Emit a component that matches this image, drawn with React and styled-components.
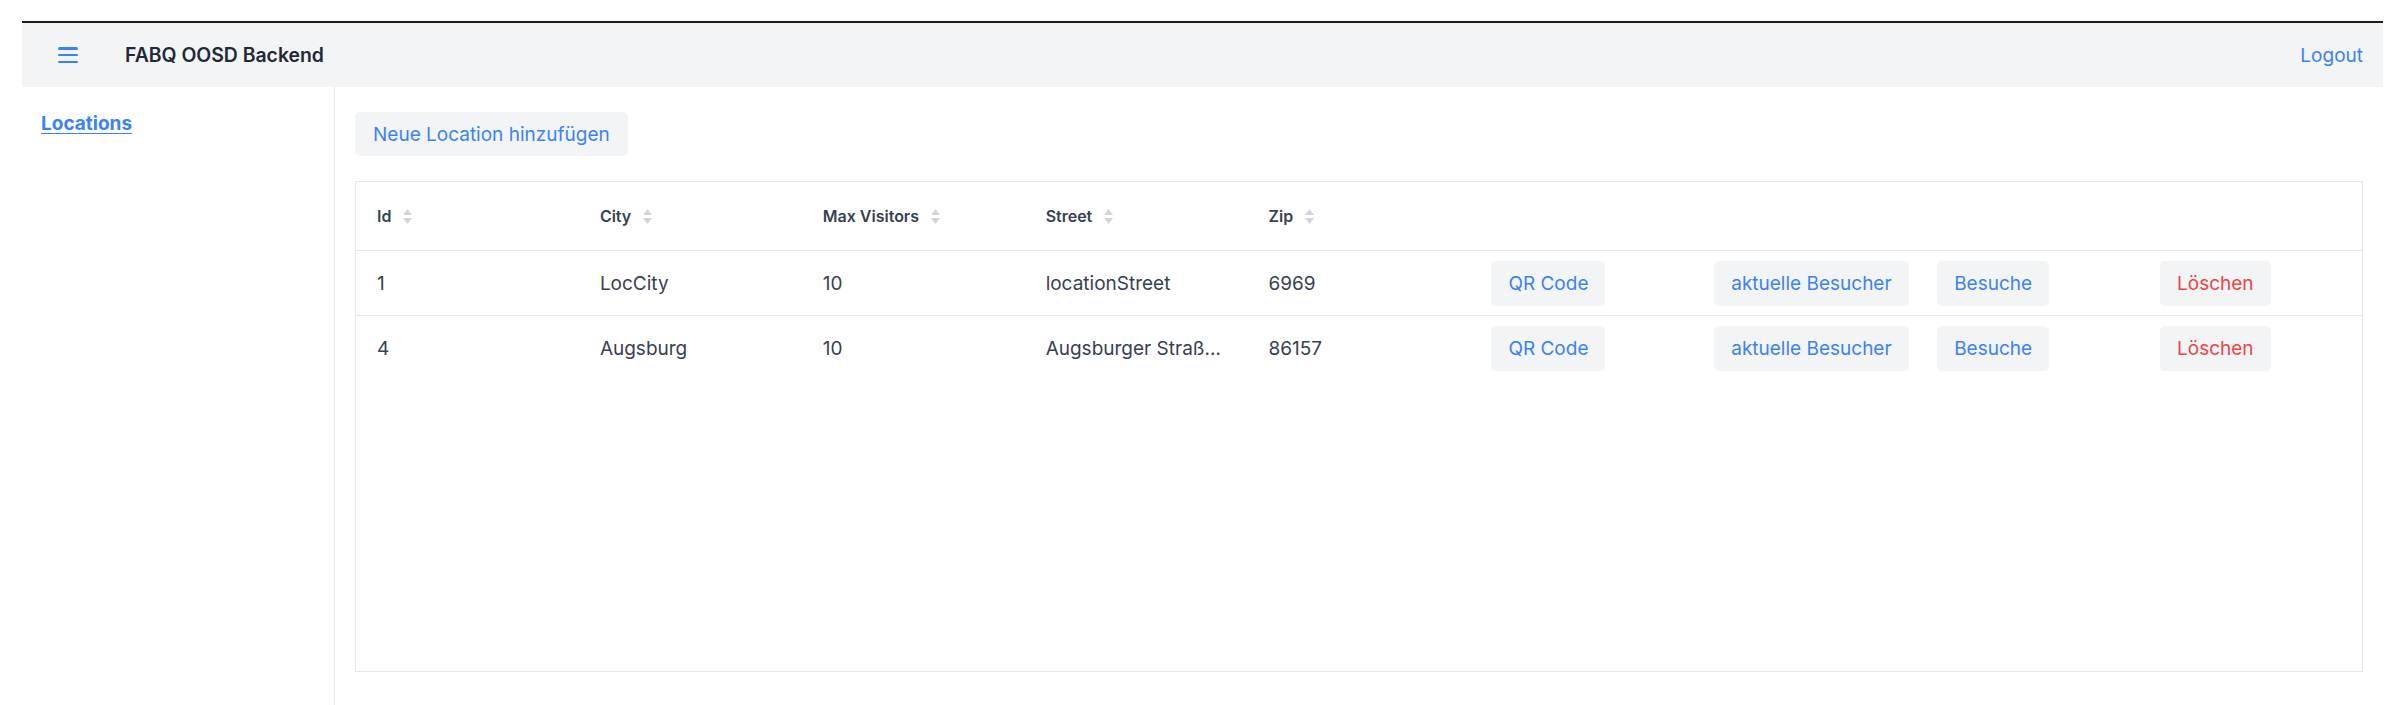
import React from 'react'
import styled, { createGlobalStyle } from 'styled-components'

const GlobalStyle = createGlobalStyle`
    html, body {
        margin: 0;
        padding: 0;
        background: #ffffff;
        font-family: Inter, "Liberation Sans", sans-serif;
        color: #374151;
    }
`

const Frame = styled.div`
    padding: 21px 3px 0 22px;
    height: 705px;
    box-sizing: border-box;
    display: flex;
    flex-direction: column;
`

const Shell = styled.div`
    border-top: 2px solid #1c1c1c;
    flex: 1;
    display: flex;
    flex-direction: column;
    min-height: 0;
`

const TopBar = styled.header`
    height: 64px;
    background: #f3f4f6;
    display: flex;
    align-items: center;
    padding: 0 20px 0 36px;
`

const MenuButton = styled.button`
    border: 0;
    background: none;
    padding: 0;
    width: 20px;
    height: 16px;
    display: flex;
    flex-direction: column;
    justify-content: space-between;
    cursor: pointer;

    span {
        display: block;
        height: 2.5px;
        border-radius: 2px;
        background: #3b82f6;
    }
`

const Title = styled.h1`
    margin: 0 0 0 47px;
    font-size: 19.4px;
    font-weight: 600;
    color: #1f2937;
`

const Logout = styled.a`
    margin-left: auto;
    font-size: 19px;
    color: #3b82f6;
    text-decoration: none;
`

const Body = styled.div`
    flex: 1;
    display: flex;
    min-height: 0;
`

const Sidebar = styled.nav`
    width: 313px;
    border-right: 1px solid #e5e7eb;
    padding: 25px 0 0 19px;
    box-sizing: border-box;
`

const NavLink = styled.a`
    font-size: 19px;
    font-weight: 700;
    color: #3b82f6;
    text-decoration: underline;
    text-underline-offset: 3px;
`

const Main = styled.main`
    flex: 1;
    padding: 25px 20px 0 20px;
    min-width: 0;
`

const ActionButton = styled.button`
    border: 0;
    border-radius: 5px;
    background: #f3f4f6;
    font-family: inherit;
    font-size: 19px;
    color: ${p => (p.$danger ? '#ef4444' : '#3b82f6')};
    height: ${p => p.$height || 45}px;
    padding: 0 ${p => p.$pad || 17}px;
    cursor: pointer;
    white-space: nowrap;
`

const TableBox = styled.div`
    margin-top: 25px;
    height: 491px;
    border: 1px solid #e5e7eb;
    box-sizing: border-box;
`

const Table = styled.table`
    width: 100%;
    table-layout: fixed;
    border-collapse: collapse;
`

const HeadCell = styled.th`
    height: 68px;
    padding: 0 21px;
    text-align: left;
    font-size: 16px;
    font-weight: 600;
    color: #374151;
    border-bottom: 1px solid #e5e7eb;
`

const HeadInner = styled.span`
    display: inline-flex;
    align-items: center;
    gap: 12px;
`

const Row = styled.tr`
    & + & td {
        border-top: 1px solid #e5e7eb;
    }
`

const Cell = styled.td`
    height: 65px;
    padding: 0 21px;
    font-size: 19px;
    color: #374151;
    white-space: nowrap;
    overflow: ${p => (p.$action ? 'visible' : 'hidden')};
    text-overflow: ellipsis;
    box-sizing: border-box;
`

const SortIcon = () => (
    <svg width="9" height="15" viewBox="0 0 9 15">
        <path d="M4.5 0 L9 6 L0 6 Z" fill="#d1d5db" />
        <path d="M0 9 L9 9 L4.5 15 Z" fill="#d1d5db" />
    </svg>
)

const columns = ['Id', 'City', 'Max Visitors', 'Street', 'Zip']

const locations = [
    { id: 1, city: 'LocCity', maxVisitors: 10, street: 'locationStreet', zip: '6969' },
    { id: 4, city: 'Augsburg', maxVisitors: 10, street: 'Augsburger Straße 12', zip: '86157' },
]

const App = () => (
    <>
        <GlobalStyle />
        <Frame>
            <Shell>
                <TopBar>
                    <MenuButton aria-label="Menu">
                        <span />
                        <span />
                        <span />
                    </MenuButton>
                    <Title>FABQ OOSD Backend</Title>
                    <Logout href="#">Logout</Logout>
                </TopBar>
                <Body>
                    <Sidebar>
                        <NavLink href="#">Locations</NavLink>
                    </Sidebar>
                    <Main>
                        <ActionButton $height={44} $pad={18}>Neue Location hinzufügen</ActionButton>
                        <TableBox>
                            <Table>
                                <thead>
                                    <tr>
                                        {columns.map(c => (
                                            <HeadCell key={c}>
                                                <HeadInner>
                                                    {c}
                                                    <SortIcon />
                                                </HeadInner>
                                            </HeadCell>
                                        ))}
                                        <HeadCell />
                                        <HeadCell />
                                        <HeadCell />
                                        <HeadCell />
                                    </tr>
                                </thead>
                                <tbody>
                                    {locations.map(l => (
                                        <Row key={l.id}>
                                            <Cell>{l.id}</Cell>
                                            <Cell>{l.city}</Cell>
                                            <Cell>{l.maxVisitors}</Cell>
                                            <Cell>{l.street}</Cell>
                                            <Cell>{l.zip}</Cell>
                                            <Cell $action><ActionButton>QR Code</ActionButton></Cell>
                                            <Cell $action><ActionButton>aktuelle Besucher</ActionButton></Cell>
                                            <Cell $action><ActionButton>Besuche</ActionButton></Cell>
                                            <Cell $action><ActionButton $danger>Löschen</ActionButton></Cell>
                                        </Row>
                                    ))}
                                </tbody>
                            </Table>
                        </TableBox>
                    </Main>
                </Body>
            </Shell>
        </Frame>
    </>
)

export default App
